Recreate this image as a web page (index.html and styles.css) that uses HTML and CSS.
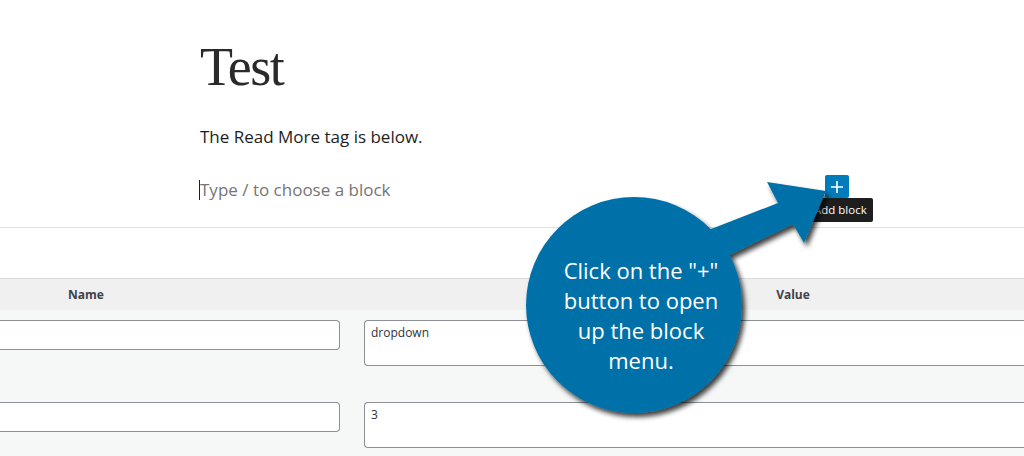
FILE: index.html
```html
<!DOCTYPE html>
<html lang="en">
<head>
    <meta charset="UTF-8">
    <title>Test</title>
    <link rel="stylesheet" href="styles.css">
</head>
<body>
    <div class="editor">
        <h1 class="post-title">Test</h1>
        <p class="post-text">The Read More tag is below.</p>
        <div class="block-row">
            <span class="placeholder">Type / to choose a block</span>
            <span class="inserter">
                <button class="add-button" aria-label="Add block">
                    <svg width="14" height="14" viewBox="0 0 14 14"><path d="M7 1v12M1 7h12" stroke="#fff" stroke-width="1.6"/></svg>
                </button>
                <span class="tooltip">Add block</span>
            </span>
        </div>
    </div>

    <div class="meta-box">
        <div class="meta-head">
            <div class="col-name">Name</div>
            <div class="col-value">Value</div>
        </div>
        <div class="meta-row">
            <div class="col-name"><input type="text" class="name-input"></div>
            <div class="col-value"><textarea class="value-input">dropdown</textarea></div>
        </div>
        <div class="meta-row">
            <div class="col-name"><input type="text" class="name-input"></div>
            <div class="col-value"><textarea class="value-input">3</textarea></div>
        </div>
    </div>

    <!-- Callout drawn over the screenshot -->
    <div class="callout">
        <svg class="callout-shape" width="1024" height="456" viewBox="0 0 1024 456">
            <defs>
                <filter id="shadow" x="-20%" y="-20%" width="140%" height="140%">
                    <feDropShadow dx="3" dy="4" stdDeviation="2.5" flood-color="#000" flood-opacity="0.75"/>
                </filter>
            </defs>
            <g filter="url(#shadow)" fill="#0071a8">
                <polygon points="688,238 778,203 767,182 826,191 804,243 793,224 703,268"/>
                <circle cx="634" cy="305" r="108"/>
            </g>
        </svg>
        <div class="callout-text">Click on the "+"<br>button to open<br>up the block<br>menu.</div>
    </div>
</body>
</html>
```

FILE: styles.css
```css
body {
    margin: 0;
    font-family: "Open Sans", "Noto Sans", sans-serif;
    color: #1e1e1e;
    background-color: #fff;
    overflow: hidden;
    width: 1024px;
    height: 456px;
    position: relative;
}
.editor {
    box-sizing: border-box;
    height: 228px;
    padding: 35px 0 0 200px;
    border-bottom: 1px solid #e0e0e0;
}
.post-title {
    margin: 0;
    font-family: "Liberation Serif", serif;
    font-weight: normal;
    font-size: 54px;
    line-height: 65px;
    letter-spacing: -1.5px;
    color: #2a2a2a;
}
.post-text {
    margin: 25px 0 0;
    font-size: 17px;
    line-height: 24px;
}
.block-row {
    margin-top: 26px;
    width: 649px;
    height: 28px;
    display: flex;
    justify-content: space-between;
    align-items: center;
}
.placeholder {
    font-size: 17px;
    line-height: 20px;
    color: #757575;
    border-left: 1px solid #1e1e1e;
    margin-left: -1px;
    margin-top: 2px;
}
.inserter {
    position: relative;
    align-self: flex-start;
}
.add-button {
    width: 24px;
    height: 23px;
    padding: 0;
    border: none;
    border-radius: 2px;
    background-color: #007cba;
    display: flex;
    align-items: center;
    justify-content: center;
}
.tooltip {
    position: absolute;
    top: 23px;
    left: -18px;
    width: 66px;
    height: 24px;
    box-sizing: border-box;
    padding-left: 7px;
    border-radius: 2px;
    background-color: #1e1e1e;
    color: #fff;
    font-size: 11.5px;
    line-height: 24px;
    white-space: nowrap;
}
.meta-box {
    margin-top: 50px;
    border-top: 1px solid #dcdcde;
    background-color: #f6f7f7;
}
.meta-head {
    display: flex;
    height: 31px;
    background-color: #f0f0f0;
    font-size: 12px;
    font-weight: bold;
    color: #3c434a;
    line-height: 31px;
    text-align: center;
}
.col-name {
    width: 352px;
    box-sizing: border-box;
    padding-right: 12px;
}
.col-value {
    flex: 1;
    box-sizing: border-box;
    padding-left: 12px;
}
/* the table is cropped on both sides, so header labels sit off-centre */
.meta-head .col-name {
    padding: 0 180px 0 0;
}
.meta-head .col-value {
    padding: 0 0 0 210px;
}
.meta-row {
    display: flex;
    padding: 10px 0 26px;
}
.name-input {
    display: block;
    width: 100%;
    height: 30px;
    box-sizing: border-box;
    border: 1px solid #8c8f94;
    border-left: none;
    border-radius: 0 4px 4px 0;
    background-color: #fff;
}
.value-input {
    display: block;
    width: 100%;
    height: 46px;
    box-sizing: border-box;
    padding: 3px 6px;
    border: 1px solid #8c8f94;
    border-right: none;
    border-radius: 4px 0 0 4px;
    background-color: #fff;
    font-family: "Open Sans", "Noto Sans", sans-serif;
    font-size: 12px;
    line-height: 18px;
    color: #2c3338;
    resize: none;
}
.callout {
    position: absolute;
    left: 0;
    top: 0;
    width: 1024px;
    height: 456px;
    pointer-events: none;
}
.callout-shape {
    display: block;
}
.callout-text {
    position: absolute;
    left: 541px;
    top: 255px;
    width: 200px;
    text-align: center;
    color: #fff;
    font-size: 22px;
    line-height: 30px;
}
```
